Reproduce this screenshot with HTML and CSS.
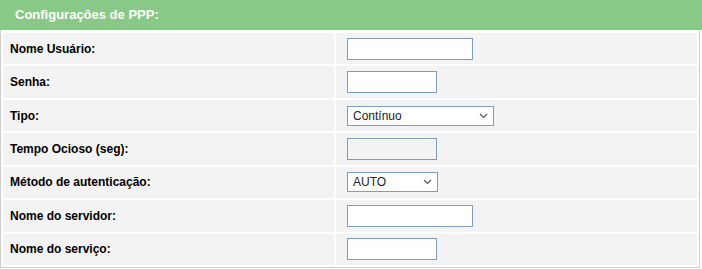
FILE: index.html
```html
<!DOCTYPE html>
<html lang="pt">
<head>
<meta charset="utf-8">
<title>Configurações de PPP</title>
<link rel="stylesheet" href="styles.css">
</head>
<body>
<div class="panel">
  <div class="panel-head">Configurações de PPP:</div>
  <div class="panel-body">
    <table class="form">
      <tr>
        <td class="lbl">Nome Usuário:</td>
        <td class="val"><input type="text" class="inp inp-long"></td>
      </tr>
      <tr>
        <td class="lbl">Senha:</td>
        <td class="val"><input type="password" class="inp inp-short"></td>
      </tr>
      <tr>
        <td class="lbl">Tipo:</td>
        <td class="val">
          <select class="sel sel-long">
            <option>Contínuo</option>
            <option>Sob demanda</option>
            <option>Manual</option>
          </select>
        </td>
      </tr>
      <tr>
        <td class="lbl">Tempo Ocioso (seg):</td>
        <td class="val"><input type="text" class="inp inp-short" disabled></td>
      </tr>
      <tr>
        <td class="lbl">Método de autenticação:</td>
        <td class="val">
          <select class="sel sel-short">
            <option>AUTO</option>
            <option>PAP</option>
            <option>CHAP</option>
          </select>
        </td>
      </tr>
      <tr>
        <td class="lbl">Nome do servidor:</td>
        <td class="val"><input type="text" class="inp inp-long"></td>
      </tr>
      <tr>
        <td class="lbl">Nome do serviço:</td>
        <td class="val"><input type="text" class="inp inp-short"></td>
      </tr>
    </table>
  </div>
</div>
</body>
</html>
```

FILE: styles.css
```css
html, body {
  margin: 0;
  padding: 0;
  background: #ffffff;
}

body {
  font-family: "Liberation Sans", Arial, sans-serif;
  font-size: 12px;
  color: #000;
  width: 702px;
}

.panel-head {
  height: 30px;
  line-height: 30px;
  background: #88c987;
  color: #ffffff;
  font-weight: bold;
  font-size: 13px;
  padding-left: 15px;
}

.panel-body {
  width: 698px;
  border: 1px solid #cccccc;
  border-top-color: #ffffff;
}

.form {
  width: 698px;
  border-collapse: separate;
  border-spacing: 2px;
  table-layout: fixed;
}

.form td {
  background: #f3f3f3;
  height: 31.43px;
  padding: 0;
  vertical-align: middle;
}

.lbl {
  width: 324px;
  padding-left: 7px !important;
  font-weight: bold;
  font-size: 12px;
  color: #000;
}

.val {
  padding-left: 11px !important;
}

.inp {
  display: block;
  box-sizing: border-box;
  height: 22px;
  margin: 0;
  padding: 0 4px;
  border: 1px solid #7f9db9;
  background: #ffffff;
  font-family: "Liberation Sans", Arial, sans-serif;
  font-size: 12px;
  outline: none;
}

.inp:disabled {
  background: #f3f3f3;
}

.inp-long {
  width: 126px;
}

.inp-short {
  width: 90px;
}

.sel {
  display: block;
  box-sizing: border-box;
  height: 20px;
  margin: 0;
  padding: 0 0 0 5px;
  border: 1px solid #7f9db9;
  border-radius: 0;
  background-color: #ffffff;
  background-image: url("data:image/svg+xml;utf8,<svg xmlns='http://www.w3.org/2000/svg' width='9' height='6' viewBox='0 0 9 6'><path d='M1 1 L4.5 4.5 L8 1' fill='none' stroke='%23555' stroke-width='1.2'/></svg>");
  background-repeat: no-repeat;
  background-position: right 5px center;
  -webkit-appearance: none;
  appearance: none;
  font-family: "Liberation Sans", Arial, sans-serif;
  font-size: 12px;
  color: #222;
  outline: none;
}

.sel-long {
  width: 147px;
}

.sel-short {
  width: 91px;
}
```
